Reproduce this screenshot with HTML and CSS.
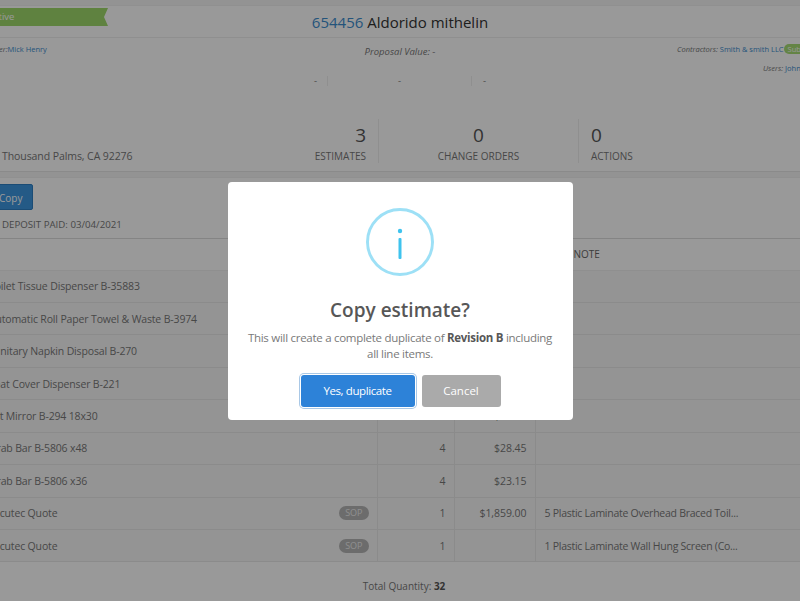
FILE: index.html
```html
<!DOCTYPE html>
<html lang="en">
  <head>
    <title>Estimate</title>
    <link rel="stylesheet" href="styles.css">
  </head>
  <body>
    <div class="page">
      <section class="card">
        <div class="title-row">
          <div class="ribbon">Active</div>
          <h1 class="job-title"><a href="#">654456</a> Aldorido mithelin</h1>
        </div>

        <div class="info-row">
          <div class="manager">Manager:<a href="#">Mick Henry</a></div>
          <div class="proposal">
            <div class="proposal-value"><em>Proposal Value:</em> -</div>
            <div class="dashes">
              <span>-</span>
              <span>-</span>
              <span>-</span>
            </div>
          </div>
          <div class="people">
            <div><em>Contractors:</em> <a href="#">Smith &amp; smith LLC</a><span class="sub-badge">Sub</span></div>
            <div class="users"><em>Users:</em> <a href="#">John Smith</a></div>
          </div>
        </div>

        <div class="stats-row">
          <div class="address">Thousand Palms, CA 92276</div>
          <div class="stat stat-estimates">
            <strong>3</strong>
            <span>ESTIMATES</span>
          </div>
          <div class="stat stat-orders">
            <strong>0</strong>
            <span>CHANGE ORDERS</span>
          </div>
          <div class="stat stat-actions">
            <strong>0</strong>
            <span>ACTIONS</span>
          </div>
        </div>
      </section>

      <section class="toolbar">
        <button class="copy-btn" type="button">Copy</button>
        <div class="deposit">DEPOSIT PAID: 03/04/2021</div>
      </section>

      <table class="items">
        <thead>
          <tr>
            <th>ITEM</th>
            <th class="num">QTY</th>
            <th class="num">PRICE</th>
            <th class="note">PRICE NOTE</th>
          </tr>
        </thead>
        <tbody>
          <tr><td>Toilet Tissue Dispenser B-35883</td><td class="num">4</td><td class="num">$41.20</td><td class="note"></td></tr>
          <tr><td>Automatic Roll Paper Towel &amp; Waste B-3974</td><td class="num">4</td><td class="num">$312.60</td><td class="note"></td></tr>
          <tr><td>Sanitary Napkin Disposal B-270</td><td class="num">4</td><td class="num">$36.75</td><td class="note"></td></tr>
          <tr><td>Seat Cover Dispenser B-221</td><td class="num">4</td><td class="num">$34.10</td><td class="note"></td></tr>
          <tr><td>Tilt Mirror B-294 18x30</td><td class="num">4</td><td class="num">$88.90</td><td class="note"></td></tr>
          <tr><td>Grab Bar B-5806 x48</td><td class="num">4</td><td class="num">$28.45</td><td class="note"></td></tr>
          <tr><td>Grab Bar B-5806 x36</td><td class="num">4</td><td class="num">$23.15</td><td class="note"></td></tr>
          <tr><td><div class="item-cell">Arcutec Quote<span class="sop">SOP</span></div></td><td class="num">1</td><td class="num">$1,859.00</td><td class="note">5 Plastic Laminate Overhead Braced Toil...</td></tr>
          <tr><td><div class="item-cell">Arcutec Quote<span class="sop">SOP</span></div></td><td class="num">1</td><td class="num"></td><td class="note">1 Plastic Laminate Wall Hung Screen (Co...</td></tr>
        </tbody>
      </table>

      <div class="total">Total Quantity: <strong>32</strong></div>
    </div>

    <div class="overlay">
      <div class="modal">
        <svg class="info-icon" width="68" height="68" viewBox="0 0 68 68" aria-hidden="true">
          <circle cx="34" cy="34" r="32.5" fill="none" stroke="#9de0f6" stroke-width="3" />
          <circle cx="34" cy="23" r="2.2" fill="#3fc3ee" />
          <rect x="32.5" y="30" width="3" height="21" rx="1" fill="#3fc3ee" />
        </svg>
        <h2 class="modal-title">Copy estimate?</h2>
        <p class="modal-text">This will create a complete duplicate of <strong>Revision B</strong> including all line items.</p>
        <div class="modal-actions">
          <button class="btn btn-confirm" type="button">Yes, duplicate</button>
          <button class="btn btn-cancel" type="button">Cancel</button>
        </div>
      </div>
    </div>
  </body>
</html>
```

FILE: styles.css
```css
html,
body {
  height: 100%;
}

body {
  margin: 0;
  overflow: hidden;
  background-color: #f6f6f6;
  color: #777;
  font-family: "Open Sans", "Noto Sans", sans-serif;
  font-size: 11px;
}

a {
  color: #3c8dce;
  text-decoration: none;
}

.page {
  display: flex;
  flex-direction: column;
  box-sizing: border-box;
  width: 880px;
  height: 100%;
  margin-left: -40px;
  padding-top: 5px;
}

.card {
  border-top: 1px solid #f0f0f0;
  border-bottom: 1px solid #e6e6e6;
  background-color: #fff;
}

.title-row {
  position: relative;
  display: flex;
  justify-content: center;
  height: 31px;
  border-bottom: 1px solid #eee;
}

.ribbon {
  position: absolute;
  top: 2px;
  left: 0;
  width: 148px;
  height: 18px;
  padding-left: 28px;
  box-sizing: border-box;
  background-color: #9ed96b;
  color: #fff;
  font-size: 9.5px;
  line-height: 18px;
  clip-path: polygon(0 0, 100% 0, calc(100% - 4px) 50%, 100% 100%, 0 100%);
}

.job-title {
  margin: 5px 0 0;
  color: #333;
  font-size: 15px;
  font-weight: 400;
  line-height: 22px;
}

.info-row {
  display: grid;
  grid-template-columns: 1fr 300px 1fr;
  height: 79px;
}

.manager {
  padding-top: 6px;
  padding-left: 16px;
  font-size: 7.5px;
  font-style: italic;
}

.manager a {
  font-style: normal;
}

.proposal {
  padding-top: 7px;
  font-size: 9.5px;
  text-align: center;
}

.dashes {
  display: flex;
  align-items: center;
  height: 10px;
  margin-top: 18px;
}

.dashes span {
  line-height: 10px;
}

.dashes span:nth-child(1) {
  width: 77px;
  padding-right: 10px;
  box-sizing: border-box;
  text-align: right;
}

.dashes span:nth-child(2) {
  width: 145px;
  border-right: 1px solid #eee;
  border-left: 1px solid #eee;
  box-sizing: border-box;
}

.dashes span:nth-child(3) {
  padding-left: 11px;
}

.people {
  padding-top: 6px;
  padding-left: 127px;
  font-size: 7.5px;
  white-space: nowrap;
}

.users {
  margin-top: 9px;
  padding-left: 86px;
}

.sub-badge {
  display: inline-block;
  padding: 0 4px;
  border-radius: 5px;
  background-color: #a7dc74;
  color: #fff;
}

.stats-row {
  display: flex;
  height: 54px;
}

.address {
  width: 355px;
  padding-top: 32px;
  padding-left: 42px;
  box-sizing: border-box;
  font-size: 10.5px;
  letter-spacing: -0.08px;
}

.stat {
  display: flex;
  flex-direction: column;
  box-sizing: border-box;
  align-self: flex-start;
  height: 44px;
  margin-top: 2px;
  padding-top: 4px;
  line-height: 1;
}

.stat strong {
  margin-bottom: 2px;
  color: #555;
  font-size: 19px;
  font-weight: 400;
  line-height: 24px;
}

.stat span {
  font-size: 10px;
  line-height: 14px;
  white-space: nowrap;
}

.stat-estimates {
  width: 64px;
  align-items: flex-end;
  padding-right: 12px;
  border-right: 1px solid #eee;
}

.stat-orders {
  width: 200px;
  align-items: center;
  border-right: 1px solid #eee;
}

.stat-actions {
  padding-left: 12px;
}

.toolbar {
  flex: none;
  height: 62px;
  margin-top: 5px;
  padding-top: 6px;
  padding-left: 42px;
  box-sizing: border-box;
  border-top: 1px solid #f0f0f0;
  border-bottom: 1px solid #ddd;
  background-color: #fff;
}

.copy-btn {
  display: block;
  width: 73px;
  height: 26px;
  margin-left: -42px;
  padding: 2px 0 0 38px;
  border: 1px solid #2d7fc4;
  border-radius: 2px;
  background-color: #3c96e0;
  color: #fff;
  font-family: inherit;
  font-size: 10px;
  text-align: left;
}

.deposit {
  margin-top: 8px;
  font-size: 9.7px;
  line-height: 14px;
}

.items {
  flex: none;
  width: 880px;
  border-collapse: collapse;
  table-layout: fixed;
  background-color: #fff;
  font-size: 10.5px;
  letter-spacing: -0.15px;
}

.items th {
  box-sizing: border-box;
  height: 31px;
  padding: 0 8px;
  border-bottom: 1px solid #eee;
  color: #666;
  font-size: 10px;
  font-weight: 400;
  letter-spacing: 0;
  text-align: left;
}

.items td {
  box-sizing: border-box;
  height: 32.44px;
  padding: 0 8px 0 29px;
  border-bottom: 1px solid #e8e8e8;
  background-color: #f7f7f7;
}

.items td + td {
  border-left: 1px solid #e8e8e8;
}

.items th:nth-child(1) {
  width: 417px;
}

.items th:nth-child(2) {
  width: 77px;
}

.items th:nth-child(3) {
  width: 81px;
}

.items .num {
  padding-left: 8px;
  text-align: right;
  letter-spacing: -0.05px;
}

.items .note {
  padding-left: 9px;
  text-align: left;
}

.items td.note {
  letter-spacing: -0.26px;
}

.item-cell {
  display: flex;
  align-items: center;
  justify-content: space-between;
}

.sop {
  padding: 0 6px;
  border-radius: 7px;
  background-color: #b4b4b4;
  color: #eee;
  font-size: 9px;
  letter-spacing: 0;
  line-height: 14px;
}

.total {
  flex: 1;
  padding-top: 17px;
  padding-left: 8px;
  background-color: #fff;
  font-size: 10px;
  text-align: center;
}

.total strong {
  color: #555;
  font-weight: 700;
}

.overlay {
  position: fixed;
  inset: 0;
  display: flex;
  align-items: center;
  justify-content: center;
  background-color: rgba(0, 0, 0, 0.4);
}

.modal {
  display: flex;
  flex-direction: column;
  align-items: center;
  box-sizing: border-box;
  width: 345px;
  height: 238px;
  padding: 26px 20px 0;
  border-radius: 4px;
  background-color: #fff;
  text-align: center;
}

.info-icon {
  flex: none;
}

.modal-title {
  margin: 21px 0 0;
  color: #575757;
  font-size: 19px;
  font-weight: 600;
  line-height: 26px;
}

.modal-text {
  margin: 7px 0 0;
  color: #797979;
  font-size: 11.5px;
  letter-spacing: -0.28px;
  line-height: 16px;
}

.modal-text strong {
  color: #575757;
}

.modal-actions {
  display: flex;
  gap: 7px;
  margin-top: 13px;
}

.btn {
  height: 32px;
  border: 0;
  border-radius: 3px;
  color: #fff;
  font-family: inherit;
  font-size: 11.5px;
}

.btn-confirm {
  width: 114px;
  margin-left: 1px;
  background-color: #2d82d8;
  box-shadow: 0 0 0 1px #fff, 0 0 0 2px #a9c8e6;
  letter-spacing: -0.4px;
}

.btn-cancel {
  width: 79px;
  background-color: #aaa;
}
```
